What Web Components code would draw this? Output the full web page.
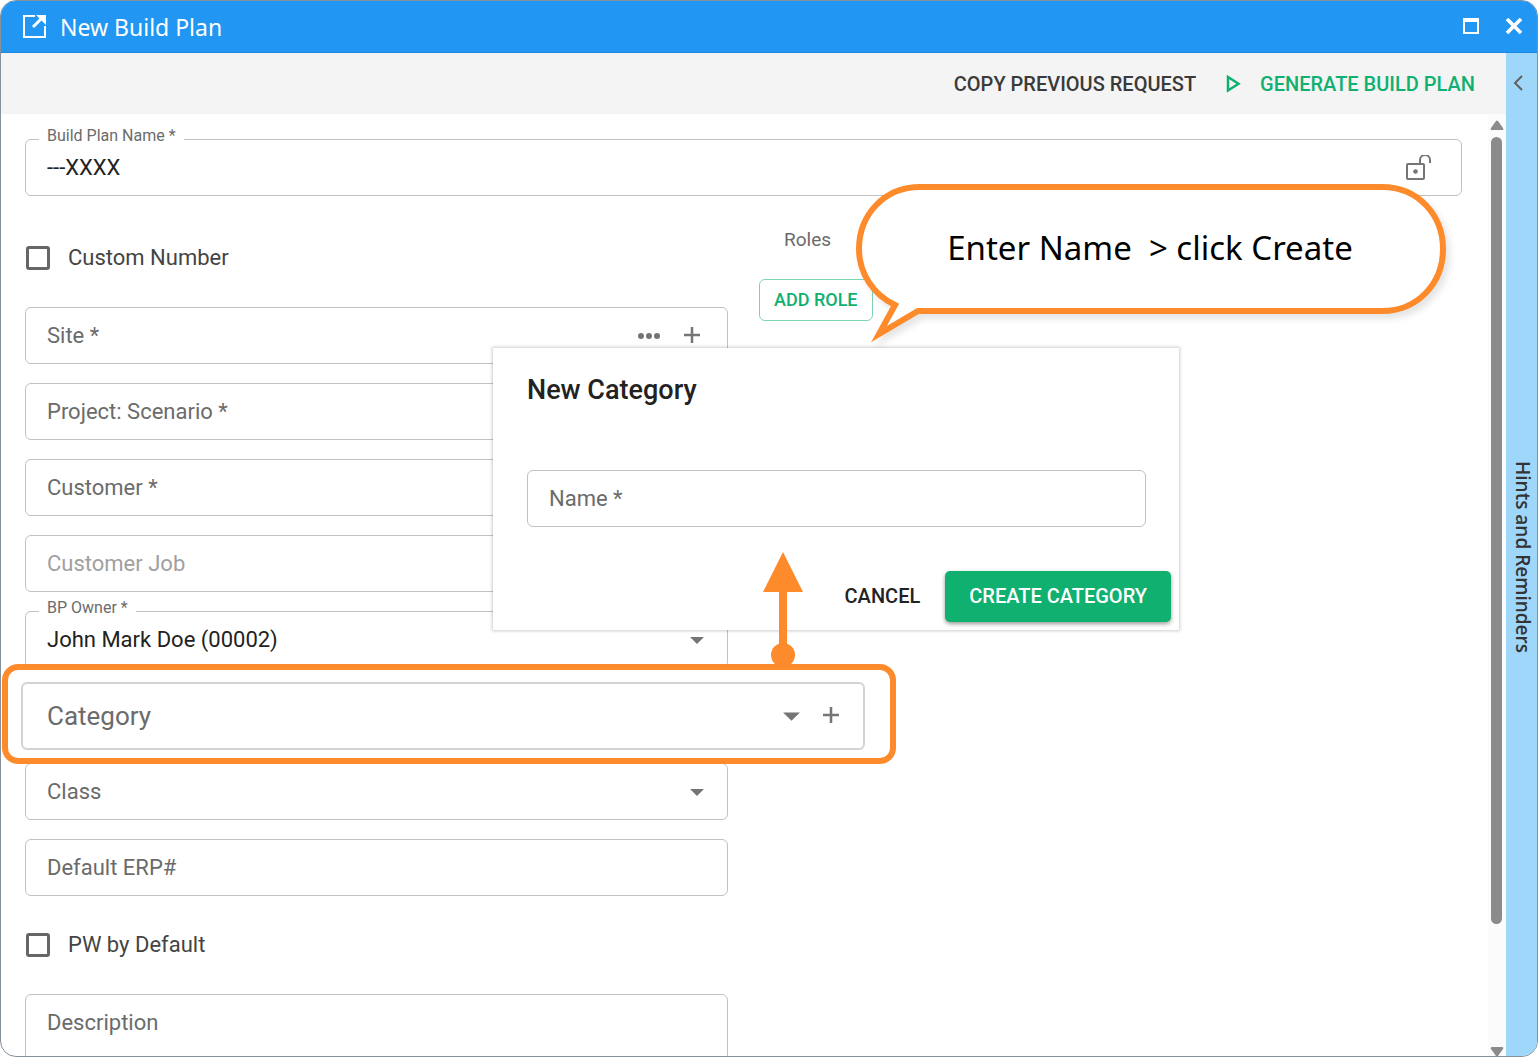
<!DOCTYPE html>
<html lang="en">
<head>
<meta charset="utf-8">
<title>New Build Plan</title>
<style>
	body {
		margin: 0;
		background: #fff;
		font-family: Roboto, "Liberation Sans", sans-serif;
		font-size: 22px;
		color: #222;
		--green: #10b070;
		--orange: #fd8b2b;
		--line: #c1c1c1;
		--muted: #6b6b6b;
	}
</style>
</head>
<body>
<bp-window heading="New Build Plan">
	<bp-toolbar slot="toolbar"></bp-toolbar>
	<bp-form></bp-form>
	<bp-hints slot="side"></bp-hints>
	<bp-dialog slot="overlay" heading="New Category">
		<bp-field label="Name *"></bp-field>
	</bp-dialog>
	<bp-arrow slot="overlay"></bp-arrow>
	<bp-callout slot="overlay">Enter Name&nbsp; &gt; click Create</bp-callout>
</bp-window>

<script>
const icons = {
	more: `<svg width="24" height="24" viewBox="0 0 24 24" fill="#757575"><circle cx="4" cy="12" r="3"/><circle cx="12" cy="12" r="3"/><circle cx="20" cy="12" r="3"/></svg>`,
	plus: `<svg width="24" height="24" viewBox="0 0 24 24" fill="none" stroke="#757575" stroke-width="2.500"><path d="M12 3v16M4 11h16"/></svg>`,
	unlock: `<svg width="26" height="26" viewBox="0 0 26 26" fill="none" stroke="#757575" stroke-width="2"><rect x="1" y="9" width="17" height="15" rx="1"/><path d="M14 9V5a5 5 0 0 1 10 0v3"/><circle cx="9.500" cy="16.500" r="2.300" fill="#757575" stroke="none"/></svg>`,
};

// The application window: title bar, toolbar, scrolling body and side rail.
class BpWindow extends HTMLElement {
	constructor() {
		super();
		this.attachShadow({ mode: "open" });
		this.render();
	}

	render() {
		this.shadowRoot.innerHTML = `
			<style>
				:host {
					display: flex;
					flex-direction: column;
					position: relative;
					box-sizing: border-box;
					height: 100vh;
					border: 1px solid #84909c;
					border-radius: 16px;
					overflow: hidden;
				}
				header {
					display: flex;
					align-items: center;
					box-sizing: border-box;
					height: 52px;
					padding: 0 14px 0 21px;
					background: #2196f3;
					border-bottom: 1px solid #1e88e0;
					color: #fff;
				}
				h1 {
					flex: 1;
					margin: 0 0 0 14px;
					font: 400 23px/32px "Noto Sans", sans-serif;
				}
				button {
					display: flex;
					padding: 0;
					border: 0;
					background: none;
				}
				.controls {
					display: flex;
					gap: 25px;
				}
				.body {
					display: flex;
					flex: 1;
					min-height: 0;
				}
				main {
					display: flex;
					flex-direction: column;
					flex: 1;
					min-width: 0;
				}
				.scroll {
					display: flex;
					flex: 1;
					min-height: 0;
				}
				.content {
					flex: 1;
					overflow: hidden;
				}
			</style>
			<header>
				<svg width="24" height="24" viewBox="0 0 24 24" fill="none" stroke="#fff" stroke-width="2">
					<path d="M13 1H2v21h21V11"/>
					<path d="M11 12L20 3" stroke-width="3"/>
					<path d="M14 0h10v10z" fill="#fff" stroke="none"/>
				</svg>
				<h1>${this.getAttribute("heading")}</h1>
				<div class="controls">
					<button aria-label="Maximize"><svg width="18" height="18" viewBox="0 0 18 18" fill="none" stroke="#fff" stroke-width="2"><rect x="2" y="1" width="14" height="14"/><path d="M1 2h16" stroke-width="4"/></svg></button>
					<button aria-label="Close"><svg width="18" height="18" viewBox="0 0 18 18" fill="none" stroke="#fff" stroke-width="3.600"><path d="M2 1l14 14M16 1L2 15"/></svg></button>
				</div>
			</header>
			<div class="body">
				<main>
					<slot name="toolbar"></slot>
					<div class="scroll">
						<div class="content"><slot></slot></div>
						<bp-scrollbar></bp-scrollbar>
					</div>
				</main>
				<slot name="side"></slot>
			</div>
			<slot name="overlay"></slot>
		`;
	}
}

class BpToolbar extends HTMLElement {
	constructor() {
		super();
		this.attachShadow({ mode: "open" });
		this.shadowRoot.innerHTML = `
			<style>
				:host {
					display: flex;
					justify-content: flex-end;
					align-items: center;
					gap: 30px;
					height: 61px;
					padding-right: 31px;
					background: #f4f4f4;
				}
				button {
					display: flex;
					align-items: center;
					gap: 19px;
					padding: 0;
					border: 0;
					background: none;
					font: 500 20px/24px Roboto, sans-serif;
					color: #3a3a3a;
				}
				.go {
					color: var(--green);
				}
			</style>
			<button>COPY PREVIOUS REQUEST</button>
			<button class="go">
				<svg width="15" height="18" viewBox="0 0 15 18" fill="none" stroke="#10b070" stroke-width="2.500"><path d="M2 2v13.500L12.500 8.700z"/></svg>
				GENERATE BUILD PLAN
			</button>
		`;
	}
}

// Drawn scrollbar, the thumb takes its share of the track
class BpScrollbar extends HTMLElement {
	constructor() {
		super();
		this.attachShadow({ mode: "open" });
		this.shadowRoot.innerHTML = `
			<style>
				:host {
					display: flex;
					flex-direction: column;
					align-items: center;
					box-sizing: border-box;
					width: 18px;
					padding: 6px 1px 0 0;
					background: #fbfbfb;
				}
				svg { flex: none; }
				.thumb {
					flex: 787;
					width: 11px;
					margin-top: 7px;
					border-radius: 6px;
					background: #8b8b8b;
				}
				.rest { flex: 123; }
			</style>
			<svg width="14" height="10" viewBox="0 0 14 10" fill="#8b8b8b"><path d="M6 1q1-1 2 0l5 7q1 2-1 2H2q-2 0-1-2z"/></svg>
			<div class="thumb"></div>
			<div class="rest"></div>
			<svg width="14" height="9" viewBox="0 0 14 9" fill="#8b8b8b"><path d="M6 9q1 1 2 0l5-7q1-2-1-2H2Q0 0 1 2z"/></svg>
		`;
	}
}

class BpHints extends HTMLElement {
	constructor() {
		super();
		this.attachShadow({ mode: "open" });
		this.shadowRoot.innerHTML = `
			<style>
				:host {
					display: flex;
					flex-direction: column;
					width: 31px;
					background: #9fd7fb;
				}
				button {
					display: flex;
					justify-content: center;
					align-items: center;
					height: 60px;
					padding: 0 7px 0 0;
					border: 0;
					background: none;
				}
				.label {
					flex: 1;
					margin-bottom: 54px;
					text-align: center;
					writing-mode: vertical-rl;
					font: 600 19px/28px "Open Sans", sans-serif;
					color: #333;
				}
			</style>
			<button aria-label="Expand hints"><svg width="10" height="16" viewBox="0 0 10 16" fill="none" stroke="#616161" stroke-width="2"><path d="M9 1L2 8l7 7"/></svg></button>
			<div class="label">Hints and Reminders</div>
		`;
	}
}

// Outlined field. type: text (default), select or textarea
class BpField extends HTMLElement {
	constructor() {
		super();
		this.attachShadow({ mode: "open" });
		this.render();
	}

	_control() {
		const value = this.getAttribute("value") || "";
		const off = this.hasAttribute("disabled") ? "disabled" : "";
		switch (this.getAttribute("type")) {
			case "select":
				return `<select id="control"><option>${value}</option></select>`;
			case "textarea":
				return `<textarea id="control"></textarea>`;
			default:
				return `<input id="control" type="text" value="${value}" ${off}>`;
		}
	}

	render() {
		const names = (this.getAttribute("icons") || "").split(" ").filter(Boolean);
		const isSelect = this.getAttribute("type") === "select";
		this.shadowRoot.innerHTML = `
			<style>
				:host {
					display: grid;
					position: relative;
					align-items: center;
					box-sizing: border-box;
					height: 57px;
					border: 1px solid var(--line);
					border-radius: 6px;
					background: #fff;
				}
				:host([type=textarea]) {
					height: 120px;
					align-items: start;
				}
				label, input, select, textarea, .icons {
					grid-area: 1 / 1;
				}
				label {
					justify-self: start;
					padding-left: 21px;
					line-height: 24px;
					color: var(--muted);
					pointer-events: none;
					z-index: 1;
				}
				:host([type=textarea]) label {
					margin-top: 16px;
				}
				:host([disabled]) label {
					color: #a0a0a0;
				}
				:host([value]) label {
					position: absolute;
					top: -16px;
					left: 13px;
					padding: 0 8px;
					background: #fff;
					font-size: 16px;
				}
				:host([large]) {
					height: 68px;
					border-width: 2px;
					border-color: #d3d3d3;
				}
				:host([large]) label {
					padding-left: 24px;
					font-size: 26px;
				}
				input, select, textarea {
					box-sizing: border-box;
					width: 100%;
					height: 100%;
					margin: 0;
					padding: 0 21px;
					border: 0;
					outline: 0;
					background: none;
					appearance: none;
					resize: none;
					font: inherit;
					color: inherit;
				}
				.icons {
					display: flex;
					align-items: center;
					justify-self: end;
					gap: 19px;
					margin-right: 23px;
				}
				:host([icons=unlock]) .icons {
					margin-right: 29px;
				}
				:host([large]) .icons {
					margin-right: 20px;
				}
				.icons button {
					display: flex;
					padding: 0;
					border: 0;
					background: none;
				}
				.caret {
					pointer-events: none;
				}
				:host([large]) .caret {
					width: 17px;
					height: 12px;
				}
			</style>
			<label for="control">${this.getAttribute("label")}</label>
			${this._control()}
			<div class="icons">
				${isSelect ? `<svg class="caret" width="14" height="10" viewBox="0 0 14 10" fill="#757575"><path d="M0 2h14L7 9z"/></svg>` : ""}
				${names.map((name) => `<button aria-label="${name}">${icons[name]}</button>`).join("")}
			</div>
		`;
	}
}

class BpCheckbox extends HTMLElement {
	constructor() {
		super();
		this.attachShadow({ mode: "open" });
		this.shadowRoot.innerHTML = `
			<style>
				:host {
					display: flex;
					align-items: center;
					height: 60px;
				}
				label {
					display: flex;
					align-items: center;
					gap: 18px;
					margin-left: 1px;
					line-height: 24px;
					color: #444;
				}
				input {
					box-sizing: border-box;
					width: 24px;
					height: 24px;
					margin: 0;
					appearance: none;
					border: 3px solid #666;
					border-radius: 3px;
				}
			</style>
			<label><input type="checkbox"><slot></slot></label>
		`;
	}
}

// Orange frame that enlarges the field it holds, laid over its row
class BpHighlight extends HTMLElement {
	constructor() {
		super();
		this.attachShadow({ mode: "open" });
		this.shadowRoot.innerHTML = `
			<style>
				:host {
					display: block;
					position: relative;
					height: 57px;
					z-index: 1;
				}
				.frame {
					position: absolute;
					top: -23px;
					left: -23px;
					right: -168px;
					box-sizing: border-box;
					height: 100px;
					padding: 12px 25px 0 13px;
					border: 6px solid var(--orange);
					border-radius: 16px;
					background: #fff;
				}
			</style>
			<div class="frame"><slot></slot></div>
		`;
	}
}

class BpForm extends HTMLElement {
	constructor() {
		super();
		this.attachShadow({ mode: "open" });
		this.shadowRoot.innerHTML = `
			<style>
				:host {
					display: flex;
					flex-direction: column;
					gap: 32px;
					padding: 25px 26px 0 24px;
				}
				.columns {
					display: grid;
					grid-template-columns: 1fr 1fr;
					gap: 31px;
				}
				.fields {
					display: flex;
					flex-direction: column;
					gap: 19px;
				}
				.roles {
					display: flex;
					flex-direction: column;
					align-items: flex-start;
					gap: 27px;
				}
				h2 {
					margin: 0 0 0 25px;
					font: 400 19px/24px Roboto, sans-serif;
					color: var(--muted);
				}
				.roles button {
					height: 42px;
					padding: 0 14px;
					border: 1px solid #7fd4b0;
					border-radius: 6px;
					background: #fff;
					font: 500 18px/24px Roboto, sans-serif;
					color: var(--green);
				}
			</style>
			<bp-field label="Build Plan Name *" value="---XXXX" icons="unlock"></bp-field>
			<div class="columns">
				<div class="fields">
					<bp-checkbox>Custom Number</bp-checkbox>
					<bp-field label="Site *" icons="more plus"></bp-field>
					<bp-field label="Project: Scenario *"></bp-field>
					<bp-field label="Customer *"></bp-field>
					<bp-field label="Customer Job" disabled></bp-field>
					<bp-field label="BP Owner *" type="select" value="John Mark Doe (00002)"></bp-field>
					<bp-highlight>
						<bp-field label="Category" type="select" icons="plus" large></bp-field>
					</bp-highlight>
					<bp-field label="Class" type="select"></bp-field>
					<bp-field label="Default ERP#"></bp-field>
					<bp-checkbox>PW by Default</bp-checkbox>
					<bp-field label="Description" type="textarea"></bp-field>
				</div>
				<section class="roles">
					<h2>Roles</h2>
					<button>ADD ROLE</button>
				</section>
			</div>
		`;
	}
}

class BpDialog extends HTMLElement {
	constructor() {
		super();
		this.attachShadow({ mode: "open" });
		this.shadowRoot.innerHTML = `
			<style>
				:host {
					display: flex;
					flex-direction: column;
					position: absolute;
					top: 347px;
					left: 492px;
					box-sizing: border-box;
					width: 686px;
					padding: 26px 8px 8px 34px;
					background: #fff;
					box-shadow: 0 0 3px 1px rgba(0, 0, 0, 0.2);
					z-index: 2;
				}
				h2 {
					margin: 0 0 64px;
					font: 500 27px/32px Roboto, sans-serif;
				}
				.fields {
					margin-right: 25px;
				}
				.actions {
					display: flex;
					justify-content: flex-end;
					gap: 25px;
					margin-top: 44px;
				}
				button {
					height: 51px;
					padding: 0 0 2px;
					border: 0;
					border-radius: 5px;
					background: none;
					font: 500 20px/24px Roboto, sans-serif;
					color: #222;
				}
				.primary {
					padding: 0 24px 2px;
					background: var(--green);
					box-shadow: 0 2px 4px rgba(0, 0, 0, 0.4);
					color: #fff;
				}
			</style>
			<h2>${this.getAttribute("heading")}</h2>
			<div class="fields"><slot></slot></div>
			<div class="actions">
				<button>CANCEL</button>
				<button class="primary">CREATE CATEGORY</button>
			</div>
		`;
	}
}

// Pointer from the category row up to the dialog
class BpArrow extends HTMLElement {
	constructor() {
		super();
		this.attachShadow({ mode: "open" });
		this.shadowRoot.innerHTML = `
			<style>
				:host {
					display: block;
					position: absolute;
					top: 551px;
					left: 762px;
					z-index: 3;
				}
				svg { display: block; }
			</style>
			<svg width="40" height="116" viewBox="0 0 40 116" fill="#fd8b2b"><path d="M20 0l20 40H24v52h-8V40H0z"/><circle cx="20" cy="103" r="12"/></svg>
		`;
	}
}

class BpCallout extends HTMLElement {
	constructor() {
		super();
		this.attachShadow({ mode: "open" });
		this.shadowRoot.innerHTML = `
			<style>
				:host {
					display: grid;
					position: absolute;
					top: 179px;
					left: 849px;
					z-index: 3;
				}
				svg, p { grid-area: 1 / 1; }
				svg {
					filter: drop-shadow(4px 5px 3px rgba(0, 0, 0, 0.1));
				}
				p {
					z-index: 1;
					margin: 44px 0 0;
					text-align: center;
					font: 400 33px/48px "Noto Sans", sans-serif;
					color: #000;
				}
			</style>
			<svg width="600" height="166" viewBox="0 0 600 166" fill="#fff" stroke="#fd8b2b" stroke-width="6">
				<path d="M70 7H532C568 7 593 35 593 69S568 131 532 131H68L29 154L45 125C24 115 9 94 9 69C9 35 34 7 70 7z" stroke-miterlimit="8"/>
			</svg>
			<p><slot></slot></p>
		`;
	}
}

customElements.define("bp-scrollbar", BpScrollbar);
customElements.define("bp-field", BpField);
customElements.define("bp-checkbox", BpCheckbox);
customElements.define("bp-highlight", BpHighlight);
customElements.define("bp-form", BpForm);
customElements.define("bp-toolbar", BpToolbar);
customElements.define("bp-hints", BpHints);
customElements.define("bp-dialog", BpDialog);
customElements.define("bp-arrow", BpArrow);
customElements.define("bp-callout", BpCallout);
customElements.define("bp-window", BpWindow);
</script>
</body>
</html>
